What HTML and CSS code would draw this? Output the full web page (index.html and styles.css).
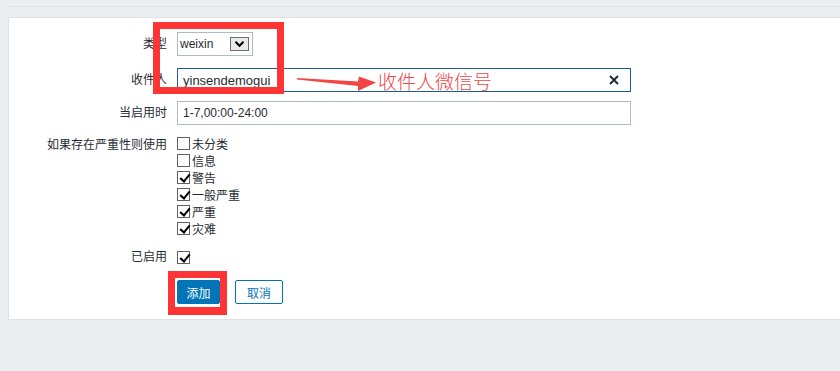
FILE: index.html
```html
<!DOCTYPE html>
<html>
  <head>
    <meta charset="utf-8" />
    <link rel="stylesheet" href="styles.css">
  </head>
  <body>
    <div class="topline"></div>
    <div class="panel">
      <form class="media-form">
        <div class="row row-type">
          <label class="lbl">类型</label>
          <div class="select">
            <span class="select-val">weixin</span>
            <span class="select-btn">
              <svg width="11" height="8" viewBox="0 0 11 8"><path d="M1.5 1.8 L5.5 5.8 L9.5 1.8" fill="none" stroke="#000" stroke-width="2"/></svg>
            </span>
          </div>
        </div>
        <div class="row row-to">
          <label class="lbl">收件人</label>
          <div class="input focused">
            <span class="input-val big">yinsendemogui</span>
            <svg class="clear" width="10" height="10" viewBox="0 0 10 10"><path d="M1 1 L9 9 M9 1 L1 9" stroke="#1f2c33" stroke-width="2"/></svg>
          </div>
        </div>
        <div class="row row-period">
          <label class="lbl">当启用时</label>
          <div class="input">
            <span class="input-val">1-7,00:00-24:00</span>
          </div>
        </div>
        <div class="row row-sev">
          <label class="lbl">如果存在严重性则使用</label>
          <ul class="checks">
            <li><span class="cb"></span>未分类</li>
            <li><span class="cb"></span>信息</li>
            <li><span class="cb on"></span>警告</li>
            <li><span class="cb on"></span>一般严重</li>
            <li><span class="cb on"></span>严重</li>
            <li><span class="cb on"></span>灾难</li>
          </ul>
        </div>
        <div class="row row-enabled">
          <label class="lbl">已启用</label>
          <span class="cb on"></span>
        </div>
        <div class="row row-buttons">
          <span class="lbl"></span>
          <div class="buttons">
            <button type="button" class="btn btn-primary">添加</button>
            <button type="button" class="btn btn-alt">取消</button>
          </div>
        </div>
      </form>

      <div class="mark mark-1"></div>
      <div class="mark mark-2"></div>
      <svg class="arrow" width="90" height="30" viewBox="0 0 90 30">
        <polygon points="0,12 61,15.5 62,10.5 79,16.5 61,25 61,20 0,13.5" fill="#f24545"/>
      </svg>
      <div class="note">收件人微信号</div>
    </div>
  </body>
</html>
```
FILE: styles.css
```css
* {
  box-sizing: border-box;
}
body {
  margin: 0;
  background-color: #ebeef0;
  font-family: Arial, "Liberation Sans", "Noto Sans CJK SC", sans-serif;
  font-size: 12px;
  color: #1f2c33;
}

.topline {
  margin: 6px 0 0 8px;
  height: 1px;
  background-color: #dde1e4;
}

.panel {
  position: relative;
  margin: 10px 0 0 8px;
  height: 303px;
  background-color: #fff;
  border-top: 1px solid #dfe3e6;
  border-left: 1px solid #dfe3e6;
  border-bottom: 1px solid #dfe3e6;
}

.media-form {
  padding-top: 14px;
}
.row {
  display: flex;
  align-items: center;
  column-gap: 10px;
}
.lbl {
  width: 158px;
  flex: none;
  text-align: right;
  line-height: 14px;
}
.row-to {
  margin-top: 12px;
}
.row-period {
  margin-top: 9px;
}
.row-sev {
  margin-top: 10px;
  align-items: flex-start;
}
.row-sev .lbl {
  padding-top: 3px;
}
.row-enabled {
  margin-top: 13px;
}
.row-buttons {
  margin-top: 16px;
}

.select {
  display: flex;
  align-items: center;
  width: 76px;
  height: 24px;
  border: 1px solid #acbbc7;
  padding: 0 3px 0 2px;
  justify-content: space-between;
}
.select-btn {
  display: flex;
  align-items: center;
  justify-content: center;
  width: 19px;
  height: 14px;
  background-color: #e9e9e9;
  border: 1px solid #707070;
}

.input {
  display: flex;
  align-items: center;
  justify-content: space-between;
  width: 454px;
  height: 24px;
  border: 1px solid #acbbc7;
  padding: 0 11px 0 5px;
}
.input.focused {
  border-color: #1b5f99;
}
.input-val.big {
  font-size: 13px;
}

.checks {
  list-style: none;
  margin: 0;
  padding: 0;
}
.checks li {
  display: flex;
  align-items: center;
  height: 17px;
}
.cb {
  display: inline-block;
  position: relative;
  width: 13px;
  height: 13px;
  border: 1px solid #616161;
  background-color: #fff;
  margin-right: 2px;
}
.cb.on::after {
  content: "";
  position: absolute;
  left: 3.5px;
  top: 0px;
  width: 4px;
  height: 8px;
  border-right: 2px solid #000;
  border-bottom: 2px solid #000;
  transform: rotate(40deg);
}

.buttons {
  display: flex;
  column-gap: 15px;
}
.btn {
  height: 24px;
  padding: 0;
  font-family: Arial, "Liberation Sans", "Noto Sans CJK SC", sans-serif;
  font-size: 12px;
  border-radius: 2px;
  cursor: pointer;
}
.btn-primary {
  width: 43px;
  color: #fff;
  background-color: #0275b8;
  border: 1px solid #0275b8;
}
.btn-alt {
  width: 48px;
  color: #0275b8;
  background-color: #fff;
  border: 1px solid #0275b8;
}

/* annotation overlay */
.mark {
  position: absolute;
  border: 7px solid #ff3535;
}
.mark-1 {
  left: 144px;
  top: 4px;
  width: 131px;
  height: 72px;
}
.mark-2 {
  left: 159px;
  top: 253px;
  width: 59px;
  height: 44px;
  border-width: 7px 7px 8px 7px;
}
.arrow {
  position: absolute;
  left: 288px;
  top: 48px;
}
.note {
  position: absolute;
  left: 369px;
  top: 51px;
  font-family: "Noto Sans CJK SC", sans-serif;
  font-weight: 300;
  font-size: 19px;
  line-height: 24px;
  color: #f24545;
}
```
